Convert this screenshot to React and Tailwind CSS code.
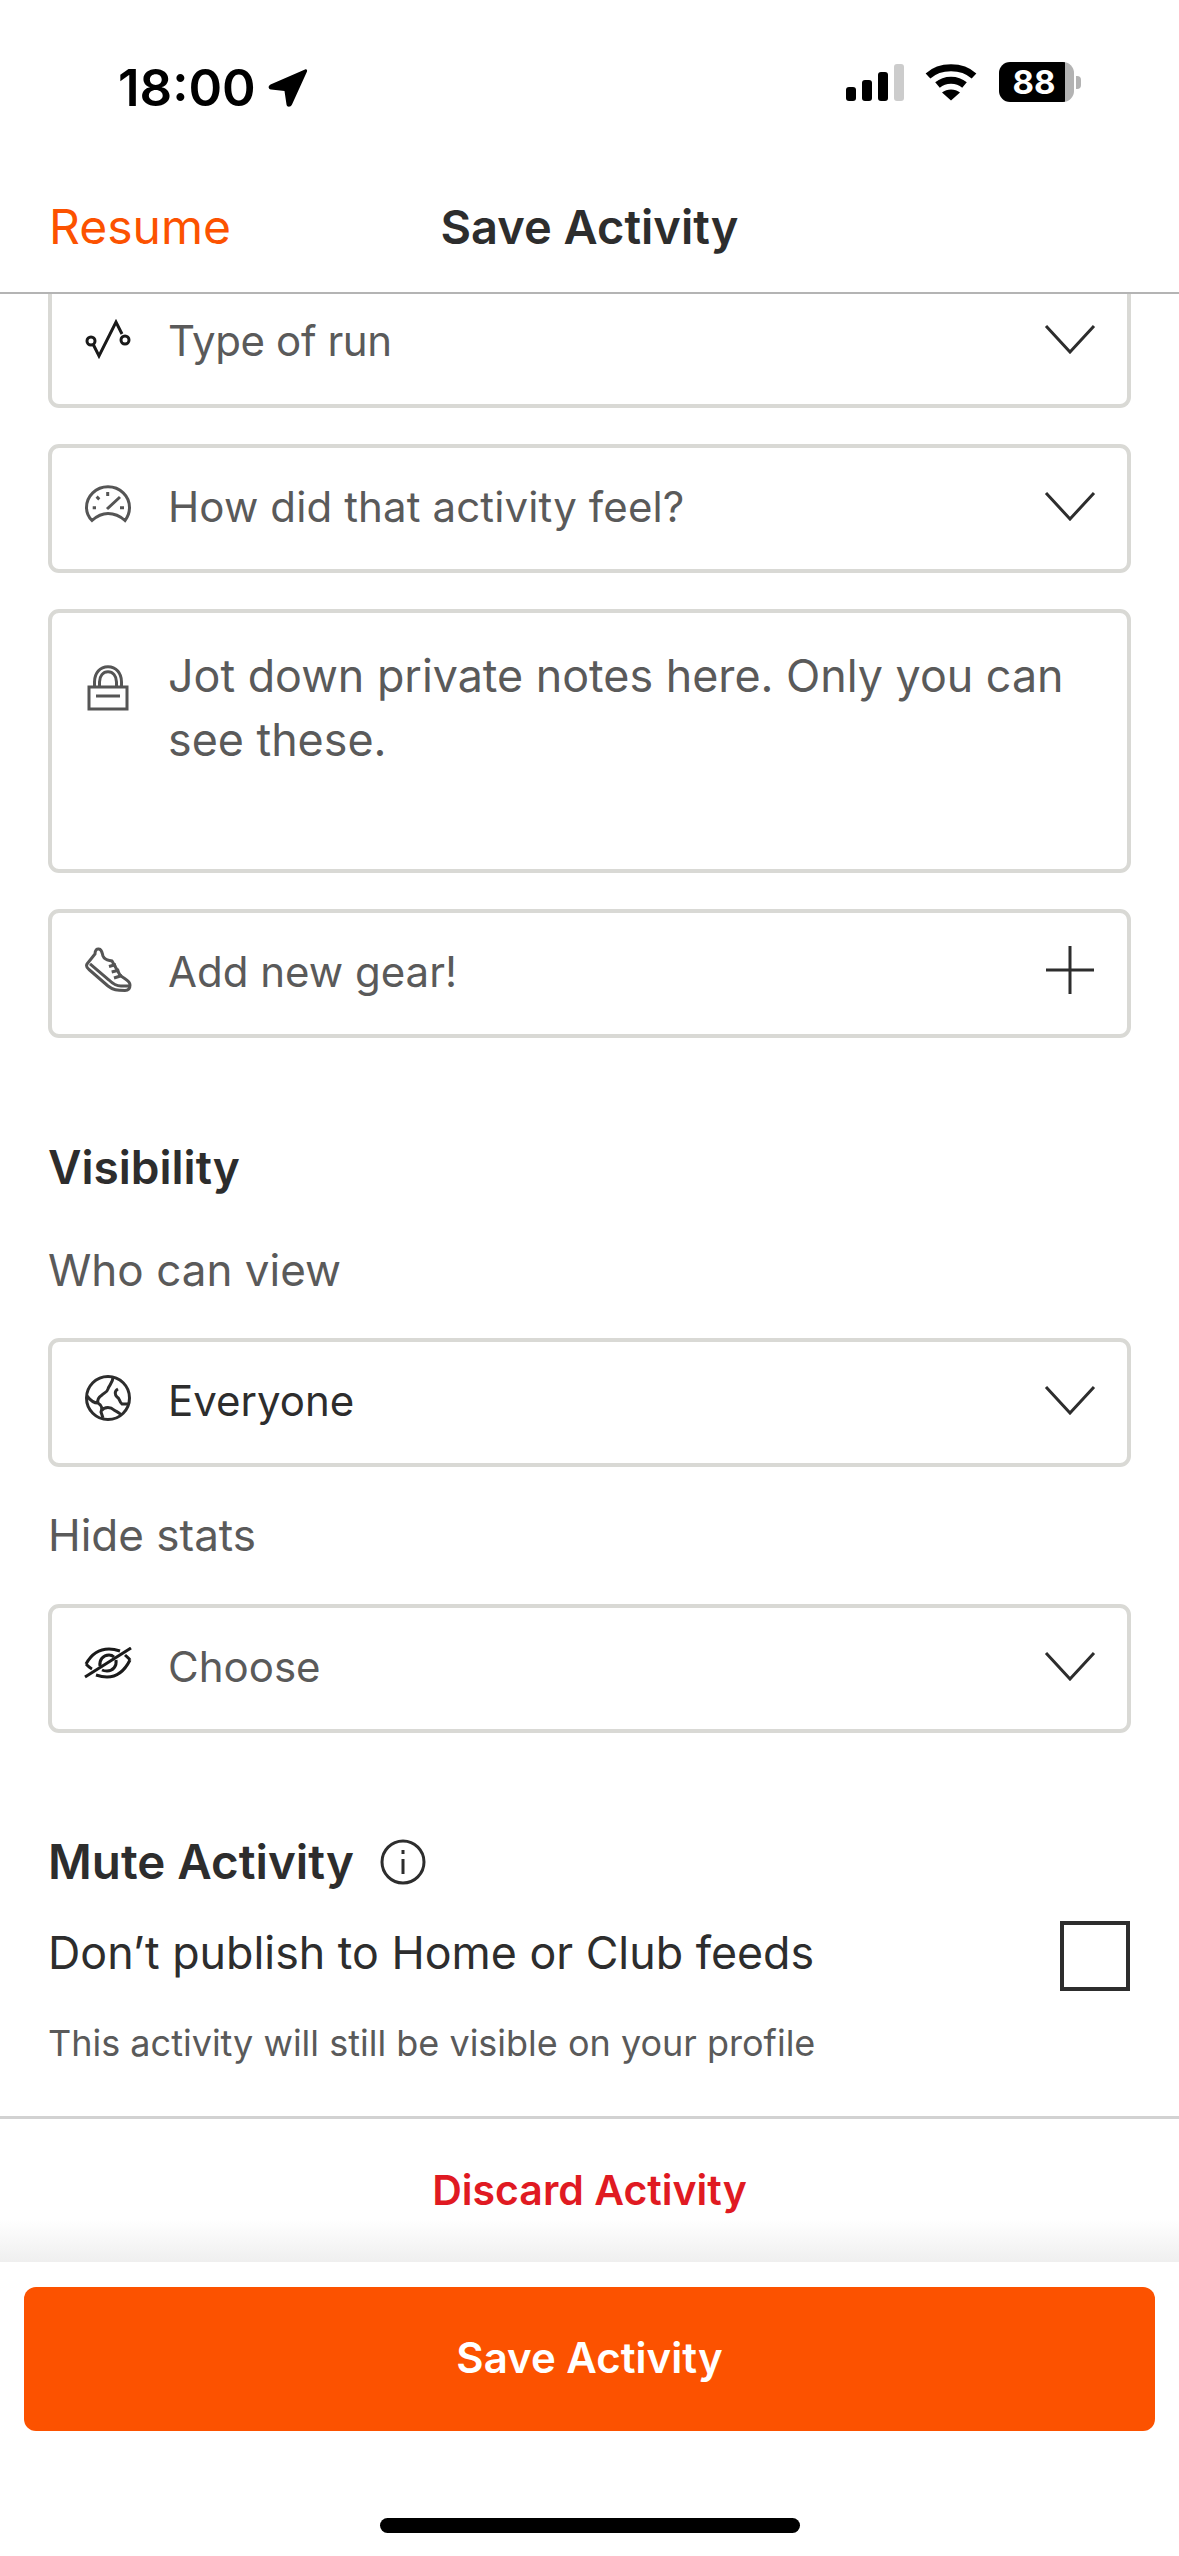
import React from "react";

const Chevron = () => (
  <svg width="52" height="30" viewBox="0 0 52 30" fill="none" className="shrink-0 mb-[6px]">
    <path d="M2 2 L26 28 L50 2" stroke="#2d2d2d" strokeWidth="3" />
  </svg>
);

const Plus = () => (
  <svg width="52" height="48" viewBox="0 0 52 48" fill="none" className="shrink-0 mb-[8px]">
    <path d="M26 0 V48 M2 24 H50" stroke="#2d2d2d" strokeWidth="3" />
  </svg>
);

const RunIcon = () => (
  <svg width="48" height="48" viewBox="0 0 48 48" fill="none" stroke="#1a1a1a" strokeWidth="3">
    <circle cx="7" cy="23" r="4" />
    <path d="M9.5 27 L15 38 L32 4 L38 16" />
    <circle cx="41" cy="22" r="4" />
  </svg>
);

const GaugeIcon = () => (
  <svg width="48" height="48" viewBox="0 0 48 48" fill="none" stroke="#555" strokeWidth="3">
    <path d="M8 35.5 C3.5 31 2.5 26 2.5 22.5 C2.5 11 12 1.8 24 1.8 C36 1.8 45.5 11 45.5 22.5 C45.5 26 44.5 31 41 35.5 C36 31 30 28.5 24 28.5 C18 28.5 13 31 8 35.5 Z" />
    <path d="M23.7 7 V11 M12.6 11.7 L15.3 14.3 M8.7 22.7 H12 M36 22.7 H40 M23 24 L36 12" />
  </svg>
);

const LockIcon = () => (
  <svg width="48" height="48" viewBox="0 0 48 48" fill="none" stroke="#555" strokeWidth="3">
    <path d="M5 22 H43 V44 H5 Z M10.5 21 V17 C10.5 8 16 1.8 24 1.8 C32 1.8 37.5 8 37.5 17 V21 M15.5 21 V17 C15.5 11 19 6.8 24 6.8 C29 6.8 32.5 11 32.5 17 V21 M12 31 H36" />
  </svg>
);

const ShoeIcon = () => (
  <svg width="48" height="48" viewBox="0 0 48 48" fill="none" stroke="#555" strokeWidth="3" className="mb-[6px]">
    <path d="M3 17 L11 7 C11 3 13 1.5 15 2 C18 2.5 18 6 19 9 C21 14 25 13 28 14 L36 28 C40 32 46 33 46 38 C46 41.5 44 43.5 41 43.5 C33 43.5 29 43 24 39 L5 22.5 C3 21 2 19 3 17 Z" />
    <path d="M6 16.8 L25 33 C29 37 33 39 37 39 L45 39 M25 19.5 L32 17.5 M27.7 25 L35.3 23 M30 31 L38 28.5" />
  </svg>
);

const GlobeIcon = () => (
  <svg width="48" height="48" viewBox="0 0 48 48" fill="none" stroke="#2d2d2d" strokeWidth="3" className="mb-[10px]">
    <circle cx="24" cy="24" r="21.5" />
    <path d="M29 3 C29 9 25 11 24 15 C23 19 19 19 18 21 C15 23 13 26 14 29 C9 29 6 26 3 22 M14 29 C17 31 19 33 17 38 L19 44 M17 37 C21 32 27 33 30 36 C33 38 36 39 37 41 M34 15 C30 17 31 21 33 23 C36 24 35 28 38 30 L44 30" />
  </svg>
);

const EyeIcon = () => (
  <svg width="48" height="32" viewBox="0 0 48 32" fill="none" stroke="#1a1a1a" strokeWidth="3" className="mb-[12px]">
    <path d="M2 17 C8 6 16 2 25 2 C29 2 33 3 36 4 M46 13 C40 25 32 30 23 30 C19 30 15 29 12 28" />
    <path d="M2 17 C4 19 6 21 8 22 M46 13 C45 11 43 10 41 8" />
    <path d="M16 19 C15 13 19 8 25 8 C27 8 29 9 30 10 M32 13 C33 19 29 24 23 24 C21 24 20 24 18 23" />
    <path d="M1 30 L47 1" />
  </svg>
);

const InfoIcon = () => (
  <svg width="46" height="46" viewBox="0 0 46 46" fill="none" stroke="#2d2d2d" strokeWidth="3">
    <circle cx="23" cy="23" r="21" />
    <path d="M23 20 V35 M23 11 V15" />
  </svg>
);

function Card({ icon, label, dark, right, track }) {
  return (
    <div className="flex h-[129px] items-center rounded-[11px] border-4 border-[#d9d9d5] pl-[32px] pr-[31px]">
      <div className="flex w-[48px] shrink-0 justify-center">{icon}</div>
      <span className={`ml-[36px] flex-1 pb-[4px] text-[42px] ${track || ""} ${dark ? "text-[#2d2d2d]" : "text-[#5a5a5a]"}`}>{label}</span>
      {right}
    </div>
  );
}

export default function App() {
  return (
    <div className="flex h-[2556px] w-[1179px] flex-col overflow-hidden bg-white font-[Inter,sans-serif]">
      {/* status bar */}
      <div className="flex h-[150px] items-start justify-between pl-[118px] pr-[98px] pt-[62px]">
        <div className="flex items-center gap-[12px]">
          <span className="text-[51px] leading-[52px] font-semibold text-black">18:00</span>
          <svg width="40" height="40" viewBox="0 0 40 40">
            <path d="M37 1.5 C38.5 1 39.5 2 39 3.5 L24 36.5 C22.5 39.5 19 39.5 18.5 36.5 L16.5 23 L3 21.5 C0 21 0 18 2.5 16.5 Z" fill="#000" />
          </svg>
        </div>
        <div className="flex items-center">
          <div className="flex items-end gap-[6px]">
            <div className="h-[14px] w-[10px] rounded-[3px] bg-black" />
            <div className="h-[21px] w-[10px] rounded-[3px] bg-black" />
            <div className="h-[29px] w-[10px] rounded-[3px] bg-black" />
            <div className="h-[37px] w-[10px] rounded-[3px] bg-[#cccccc]" />
          </div>
          <svg width="52" height="38" viewBox="0 0 52 38" className="ml-[21px]" fill="none" stroke="#000" strokeWidth="7">
            <path d="M3 13 C15 2 37 2 49 13" />
            <path d="M12.5 22 C20 15.5 32 15.5 39.5 22" />
            <path d="M26 37.5 L17 29.5 C22 25.5 30 25.5 35 29.5 Z" fill="#000" stroke="none" />
          </svg>
          <div className="ml-[22px] flex items-center">
            <div className="flex h-[40px] w-[75px] overflow-hidden rounded-[11px]">
              <div className="flex w-[66px] items-center justify-center bg-black pl-[4px] text-[33px] leading-none font-bold text-white">88</div>
              <div className="w-[9px] bg-[#b3b3b3]" />
            </div>
            <div className="ml-[2px] h-[13px] w-[5px] rounded-r-[4px] bg-[#b3b3b3]" />
          </div>
        </div>
      </div>

      {/* nav */}
      <div className="grid h-[144px] grid-cols-[1fr_auto_1fr] items-center border-b-2 border-[#b4b4b4] px-[49px] pt-[12px]">
        <span className="text-[48px] text-[#fc5200]">Resume</span>
        <span className="text-[47px] font-semibold text-[#2d2d2d]">Save Activity</span>
        <span />
      </div>

      {/* form */}
      <div className="flex flex-1 flex-col">
        <div className="flex flex-col px-[48px]">
          <div className="flex h-[114px] items-center rounded-b-[11px] border-x-4 border-b-4 border-[#d9d9d5] pb-[14px] pl-[32px] pr-[31px]">
            <div className="flex w-[48px] shrink-0 justify-center"><RunIcon /></div>
            <span className="ml-[36px] flex-1 pb-[4px] text-[42px] tracking-[-0.4px] text-[#5a5a5a]">Type of run</span>
            <Chevron />
          </div>
          <div className="mt-[36px]">
            <Card icon={<GaugeIcon />} label="How did that activity feel?" track="tracking-[0.12px]" right={<Chevron />} />
          </div>
          <div className="mt-[36px] flex h-[264px] rounded-[11px] border-4 border-[#d9d9d5] pl-[32px] pr-[31px] pt-[31px]">
            <div className="flex w-[48px] shrink-0 justify-center pt-[21px]"><LockIcon /></div>
            <p className="ml-[36px] flex-1 text-[44.8px] leading-[64px] text-[#5a5a5a]">Jot down private notes here. Only you can see these.</p>
          </div>
          <div className="mt-[36px]">
            <Card icon={<ShoeIcon />} label="Add new gear!" right={<Plus />} />
          </div>

          <h2 className="mt-[99px] text-[46px] leading-[60px] font-semibold text-[#2d2d2d]">Visibility</h2>
          <div className="mt-[43px] text-[44px] leading-[60px] text-[#5a5a5a]">Who can view</div>
          <div className="mt-[38px]">
            <Card icon={<GlobeIcon />} label="Everyone" dark right={<Chevron />} />
          </div>
          <div className="mt-[38px] text-[44px] leading-[60px] text-[#5a5a5a]">Hide stats</div>
          <div className="mt-[39px]">
            <Card icon={<EyeIcon />} label="Choose" right={<Chevron />} />
          </div>

          <div className="mt-[99px] flex h-[60px] items-center gap-[26px]">
            <h2 className="text-[47.5px] leading-[60px] font-semibold text-[#2d2d2d]">Mute Activity</h2>
            <InfoIcon />
          </div>
          <div className="mt-[29px] flex h-[70px] items-center justify-between">
            <span className="pb-[4px] text-[44.75px] text-[#2d2d2d]">Don’t publish to Home or Club feeds</span>
            <div className="mr-[1px] h-[70px] w-[70px] border-4 border-[#2d2d2d]" />
          </div>
          <div className="mt-[27px] text-[36px] leading-[50px] text-[#5a5a5a]">This activity will still be visible on your profile</div>
        </div>

        <div className="mt-[48px] flex h-[146px] items-start justify-center border-t-[3px] border-[#d2d2d2] bg-[linear-gradient(to_bottom,#ffffff_70%,#efefef)] pt-[42px]">
          <span className="text-[41px] leading-[58px] font-semibold text-[#e01a22]">Discard Activity</span>
        </div>

        <div className="flex flex-1 flex-col items-center px-[24px] pt-[25px]">
          <div className="flex h-[144px] w-full items-center justify-center rounded-[12px] bg-[#fc5200] pb-[3px] text-[42px] font-semibold text-white">Save Activity</div>
          <div className="mt-[87px] h-[15px] w-[420px] rounded-full bg-black" />
        </div>
      </div>
    </div>
  );
}
